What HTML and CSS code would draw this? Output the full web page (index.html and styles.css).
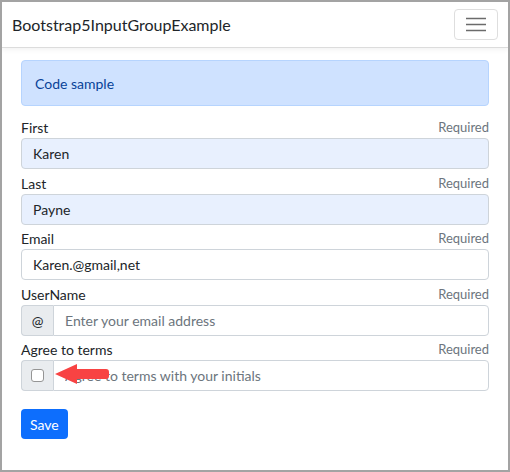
FILE: index.html
```html
<!DOCTYPE html>
<html lang="en">
<head>
<meta charset="utf-8">
<title>Bootstrap5InputGroupExample</title>
<link rel="stylesheet" href="styles.css">
</head>
<body>
<div class="frame">
  <nav class="navbar">
    <span class="brand">Bootstrap5InputGroupExample</span>
    <button class="toggler" type="button" aria-label="Toggle navigation">
      <svg width="20" height="16" viewBox="0 0 20 16"><path d="M0 2.5h20M0 8.5h20M0 14.5h20" stroke="#6b6b6b" stroke-width="1.6" fill="none"/></svg>
    </button>
  </nav>
  <main class="content">
    <div class="alert">Code sample</div>
    <form class="form">
      <div class="field first">
        <div class="label-row"><label>First</label><span class="req">Required</span></div>
        <input class="control autofill" type="text" value="Karen">
      </div>
      <div class="field">
        <div class="label-row"><label>Last</label><span class="req">Required</span></div>
        <input class="control autofill" type="text" value="Payne">
      </div>
      <div class="field">
        <div class="label-row"><label>Email</label><span class="req">Required</span></div>
        <input class="control" type="text" value="Karen.@gmail,net">
      </div>
      <div class="field">
        <div class="label-row"><label>UserName</label><span class="req">Required</span></div>
        <div class="group">
          <span class="addon">@</span>
          <input class="control grouped" type="text" placeholder="Enter your email address">
        </div>
      </div>
      <div class="field">
        <div class="label-row"><label>Agree to terms</label><span class="req">Required</span></div>
        <div class="group">
          <span class="addon"><span class="check"></span></span>
          <input class="control grouped" type="text" placeholder="Agree to terms with your initials">
          <svg class="arrow" width="55" height="22" viewBox="0 0 55 22"><path d="M0 11 L22 1 L22 6 L51 6 Q54 6 54 9 L54 13 Q54 16 51 16 L22 16 L22 21 Z" fill="#f84343"/></svg>
        </div>
      </div>
      <button class="save" type="button">Save</button>
    </form>
  </main>
</div>
</body>
</html>
```
FILE: styles.css
```css
html, body {
  margin: 0;
  padding: 0;
  background: #fff;
}
.frame {
  width: 510px;
  height: 472px;
  box-sizing: border-box;
  border: 2px solid #a3a3a3;
  overflow: hidden;
  font-family: Lato, "Open Sans", sans-serif;
  color: #212529;
  font-size: 14px;
}
.navbar {
  height: 45px;
  border-bottom: 1px solid #dcdcdc;
  box-shadow: 0 2px 5px rgba(0, 0, 0, 0.05);
  display: flex;
  align-items: center;
  justify-content: space-between;
  padding: 0 10px 0 10px;
}
.brand {
  font-size: 16px;
  color: #212529;
}
.toggler {
  width: 44px;
  height: 31px;
  border: 1px solid #dedede;
  border-radius: 4px;
  background: #fff;
  display: flex;
  align-items: center;
  justify-content: center;
  padding: 0;
  margin-top: -1px;
}
.content {
  padding: 12px 19px 0;
}
.alert {
  height: 44px;
  border: 1px solid #b6d4fe;
  background: #cfe2ff;
  color: #084298;
  border-radius: 4px;
  padding: 0 13px;
  display: flex;
  align-items: center;
}
.form {
  display: flex;
  flex-direction: column;
}
.field {
  margin-top: 3.5px;
}
.field.first {
  margin-top: 11px;
}
.label-row {
  display: flex;
  justify-content: space-between;
  align-items: center;
  height: 21px;
  line-height: 21px;
}
.req {
  color: #6c757d;
  font-size: 13px;
}
.control {
  display: block;
  width: 100%;
  box-sizing: border-box;
  height: 31px;
  border: 1px solid #ced4da;
  border-radius: 4px;
  padding: 0 11px;
  font-family: inherit;
  font-size: 14px;
  color: #212529;
  background: #fff;
  outline: none;
}
.control.autofill {
  background: #e8f0fe;
}
.control::placeholder {
  color: #6c757d;
}
.group {
  position: relative;
  display: flex;
}
.addon {
  width: 32px;
  height: 31px;
  box-sizing: border-box;
  border: 1px solid #ced4da;
  border-right: 0;
  border-radius: 4px 0 0 4px;
  background: #e9ecef;
  display: flex;
  align-items: center;
  justify-content: center;
  flex: none;
}
.control.grouped {
  flex: 1;
  border-radius: 0 4px 4px 0;
}
.check {
  width: 13px;
  height: 13px;
  box-sizing: border-box;
  border: 1px solid #959595;
  border-radius: 3px;
  background: #fff;
}
.arrow {
  position: absolute;
  left: 34px;
  top: 3px;
}
.save {
  align-self: flex-start;
  margin-top: 18px;
  height: 30px;
  padding: 0 9px;
  background: #0d6efd;
  color: #fff;
  border: 0;
  border-radius: 4px;
  font-family: inherit;
  font-size: 14px;
}
```
